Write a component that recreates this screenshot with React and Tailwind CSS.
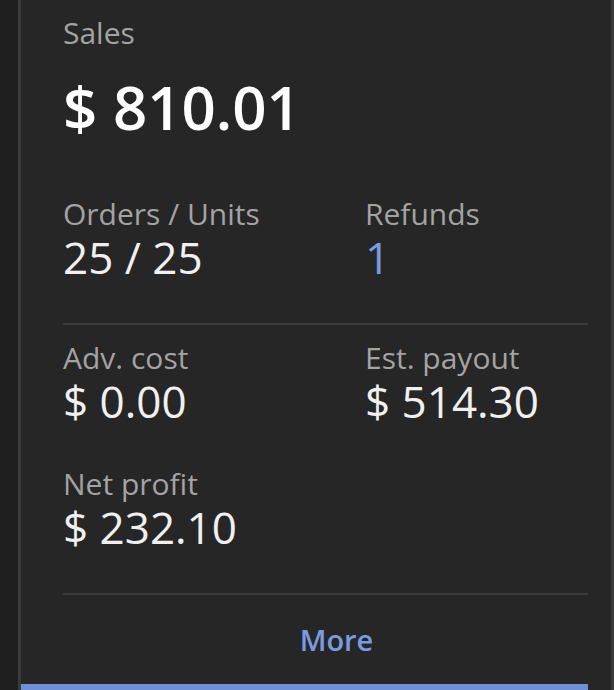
export default function App() {
  const label = "text-[30px] leading-[30px] text-[#a3a3a3]";
  const value = "mt-[5px] text-[44px] leading-[46px] text-[#f0f0f0]";

  return (
    <div
      className="w-[614px] h-[690px] overflow-hidden bg-[#1f1f1f] flex"
      style={{ fontFamily: '"Open Sans", "Noto Sans", sans-serif' }}
    >
      {/* left rail */}
      <div className="w-[18px] shrink-0" />
      <div className="w-[3px] shrink-0 bg-[#3a3a3a]" />

      {/* card */}
      <div className="flex-1 bg-[#262626] flex flex-col relative">
        <div className="flex-1 pl-[42px] pr-[26px] pt-[18px] flex flex-col">
          {/* SALES */}
          <div className={label}>Sales</div>
          <div className="mt-[27px] text-[60px] leading-[64px] font-semibold text-white">
            $ 810.01
          </div>

          {/* ORDERS / REFUNDS */}
          <div className="mt-[60px] grid grid-cols-[302px_1fr]">
            <div>
              <div className={label}>Orders / Units</div>
              <div className={value}>25 / 25</div>
            </div>
            <div>
              <div className={label}>Refunds</div>
              <div className="mt-[5px] text-[44px] leading-[46px] text-[#7b9be0]">1</div>
            </div>
          </div>

          <div className="mt-[43px] h-[2px] bg-[#3a3a3a]" />

          {/* COSTS */}
          <div className="mt-[18px] grid grid-cols-[302px_1fr] gap-y-[45px]">
            <div>
              <div className={label}>Adv. cost</div>
              <div className={value}>$ 0.00</div>
            </div>
            <div>
              <div className={label}>Est. payout</div>
              <div className={value}>$ 514.30</div>
            </div>
            <div>
              <div className={label}>Net profit</div>
              <div className={value}>$ 232.10</div>
            </div>
          </div>

          <div className="mt-[43px] h-[2px] bg-[#3a3a3a]" />

          {/* MORE */}
          <div className="mt-[28px] pl-[22px] text-center text-[29px] leading-[34px] font-semibold text-[#7b9be0]">
            More
          </div>
        </div>

        <div className="h-[6px] mr-[26px] bg-[#6f8fd6]" />
        <div className="absolute right-0 top-0 bottom-0 w-[3px] bg-[#3a3a3a]" />
      </div>
    </div>
  );
}
